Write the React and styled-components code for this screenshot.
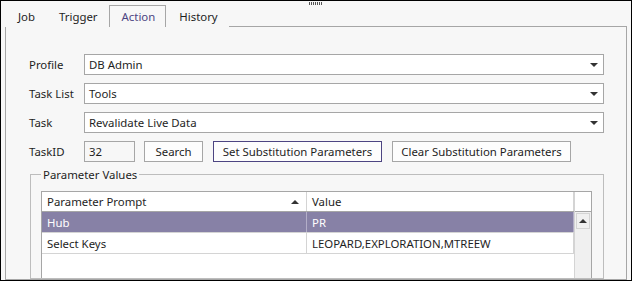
import * as React from 'react'
import styled, { createGlobalStyle } from 'styled-components'

const colors = {
  bg: '#f7f7f7',
  text: '#1e1e1e',
  border: '#a6a6a6',
  light: '#d4d4d4',
  accent: '#4d4582',
  selected: '#8781a6',
}

const GlobalStyle = createGlobalStyle`
  body {
    margin: 0;
    font-family: 'Noto Sans', 'Open Sans', sans-serif;
    font-size: 11.4px;
    color: ${colors.text};
  }
`

const Window = styled.div`
  position: relative;
  box-sizing: border-box;
  width: 632px;
  height: 281px;
  border: 1px solid #000;
  background: ${colors.bg};
  padding: 4px 4px 0;
  display: flex;
  flex-direction: column;
  overflow: hidden;
`

const Grip = styled.div`
  position: absolute;
  top: 1px;
  left: 308px;
  width: 14px;
  height: 3px;
  background: repeating-linear-gradient(90deg, #555 0 1px, transparent 1px 2px);
`

const TabStrip = styled.div`
  display: flex;
  height: 21px;
`

const Tab = styled.div`
  position: relative;
  z-index: 1;
  box-sizing: border-box;
  height: 22px;
  padding: 0 10px 0 12px;
  display: flex;
  align-items: center;
  border: 1px solid ${props => (props.active ? colors.border : 'transparent')};
  border-bottom: none;
  background: ${colors.bg};
  color: ${props => (props.active ? colors.accent : colors.text)};
`

const Panel = styled.div`
  flex: 1;
  border: 1px solid ${colors.border};
  padding: 27px 22px 0 23px;
  display: flex;
  flex-direction: column;
  gap: 8px;
`

const Row = styled.div`
  display: flex;
  align-items: center;
  height: 21px;
`

const Label = styled.span`
  width: 55px;
  flex: none;
`

const Combo = styled.div`
  flex: 1;
  box-sizing: border-box;
  height: 21px;
  border: 1px solid ${colors.border};
  background: #fff;
  display: flex;
  align-items: center;
  padding: 0 5px 0 4px;
  justify-content: space-between;
`

const TextBox = styled.div`
  box-sizing: border-box;
  width: 51px;
  height: 21px;
  border: 1px solid ${colors.border};
  background: ${colors.bg};
  display: flex;
  align-items: center;
  padding-left: 4px;
`

const Button = styled.div`
  box-sizing: border-box;
  width: ${props => props.width}px;
  height: 21px;
  margin-left: ${props => props.gap}px;
  border: 1px solid ${props => (props.focused ? colors.accent : colors.border)};
  background: #fdfdfd;
  display: flex;
  align-items: center;
  justify-content: center;
`

const Group = styled.fieldset`
  margin: -3px 0 0 1px;
  border: 1px solid #bdbdbd;
  padding: 9px 11px 0 10px;
  min-width: 0;
  flex: 1;
  display: flex;
`

const Legend = styled.legend`
  padding: 0 2px;
  line-height: 15px;
`

const GridFrame = styled.div`
  flex: 1;
  display: flex;
  border: 1px solid ${colors.border};
  border-bottom: none;
  background: #fff;
`

const Table = styled.div`
  flex: 1;
  display: flex;
  flex-direction: column;
`

const GridRow = styled.div`
  display: grid;
  grid-template-columns: 265px 1fr;
  height: ${props => (props.header ? 19 : 20)}px;
  border-bottom: 1px solid ${props => (props.header ? colors.border : colors.light)};
  background: ${props => (props.selected ? colors.selected : '#fff')};
  color: ${props => (props.selected ? '#fff' : colors.text)};
`

const Cell = styled.div`
  display: flex;
  align-items: center;
  justify-content: space-between;
  padding: 0 7px 0 5px;
  border-right: 1px solid ${props => (props.selected ? '#b3aec8' : colors.light)};
  white-space: nowrap;
  overflow: hidden;
`

const ScrollColumn = styled.div`
  width: 16px;
  border-left: 1px solid ${colors.light};
  display: flex;
  flex-direction: column;
`

const ScrollHead = styled.div`
  height: 19px;
  background: #fff;
  border-bottom: 1px solid ${colors.border};
`

const Track = styled.div`
  flex: 1;
  background: #f0f0f0;
  padding: 1px 1px 0 1px;
`

const ScrollButton = styled.div`
  box-sizing: border-box;
  height: 16px;
  border: 1px solid ${colors.light};
  display: flex;
  align-items: center;
  justify-content: center;
`

const Arrow = ({ up }) => (
  <svg width="8" height="4" viewBox="0 0 8 4">
    <polygon points={up ? '0,4 8,4 4,0' : '0,0 8,0 4,4'} fill="#333" />
  </svg>
)

const combos = [
  { label: 'Profile', value: 'DB Admin' },
  { label: 'Task List', value: 'Tools' },
  { label: 'Task', value: 'Revalidate Live Data' },
]

const params = [
  { prompt: 'Hub', value: 'PR', selected: true },
  { prompt: 'Select Keys', value: 'LEOPARD,EXPLORATION,MTREEW' },
]

export default function App() {
  return (
    <>
      <GlobalStyle />
      <Window>
        <Grip />
        <TabStrip>
          <Tab>Job</Tab>
          <Tab>Trigger</Tab>
          <Tab active>Action</Tab>
          <Tab>History</Tab>
        </TabStrip>
        <Panel>
          {combos.map(c => (
            <Row key={c.label}>
              <Label>{c.label}</Label>
              <Combo>
                {c.value}
                <Arrow />
              </Combo>
            </Row>
          ))}
          <Row>
            <Label>TaskID</Label>
            <TextBox>32</TextBox>
            <Button width={59} gap={9}>Search</Button>
            <Button width={169} gap={10} focused>Set Substitution Parameters</Button>
            <Button width={179} gap={10}>Clear Substitution Parameters</Button>
          </Row>
          <Group>
            <Legend>Parameter Values</Legend>
            <GridFrame>
              <Table>
                <GridRow header>
                  <Cell>
                    Parameter Prompt
                    <Arrow up />
                  </Cell>
                  <Cell>Value</Cell>
                </GridRow>
                {params.map(p => (
                  <GridRow key={p.prompt} selected={p.selected}>
                    <Cell selected={p.selected}>{p.prompt}</Cell>
                    <Cell selected={p.selected}>{p.value}</Cell>
                  </GridRow>
                ))}
              </Table>
              <ScrollColumn>
                <ScrollHead />
                <Track>
                  <ScrollButton>
                    <Arrow up />
                  </ScrollButton>
                </Track>
              </ScrollColumn>
            </GridFrame>
          </Group>
        </Panel>
      </Window>
    </>
  )
}
